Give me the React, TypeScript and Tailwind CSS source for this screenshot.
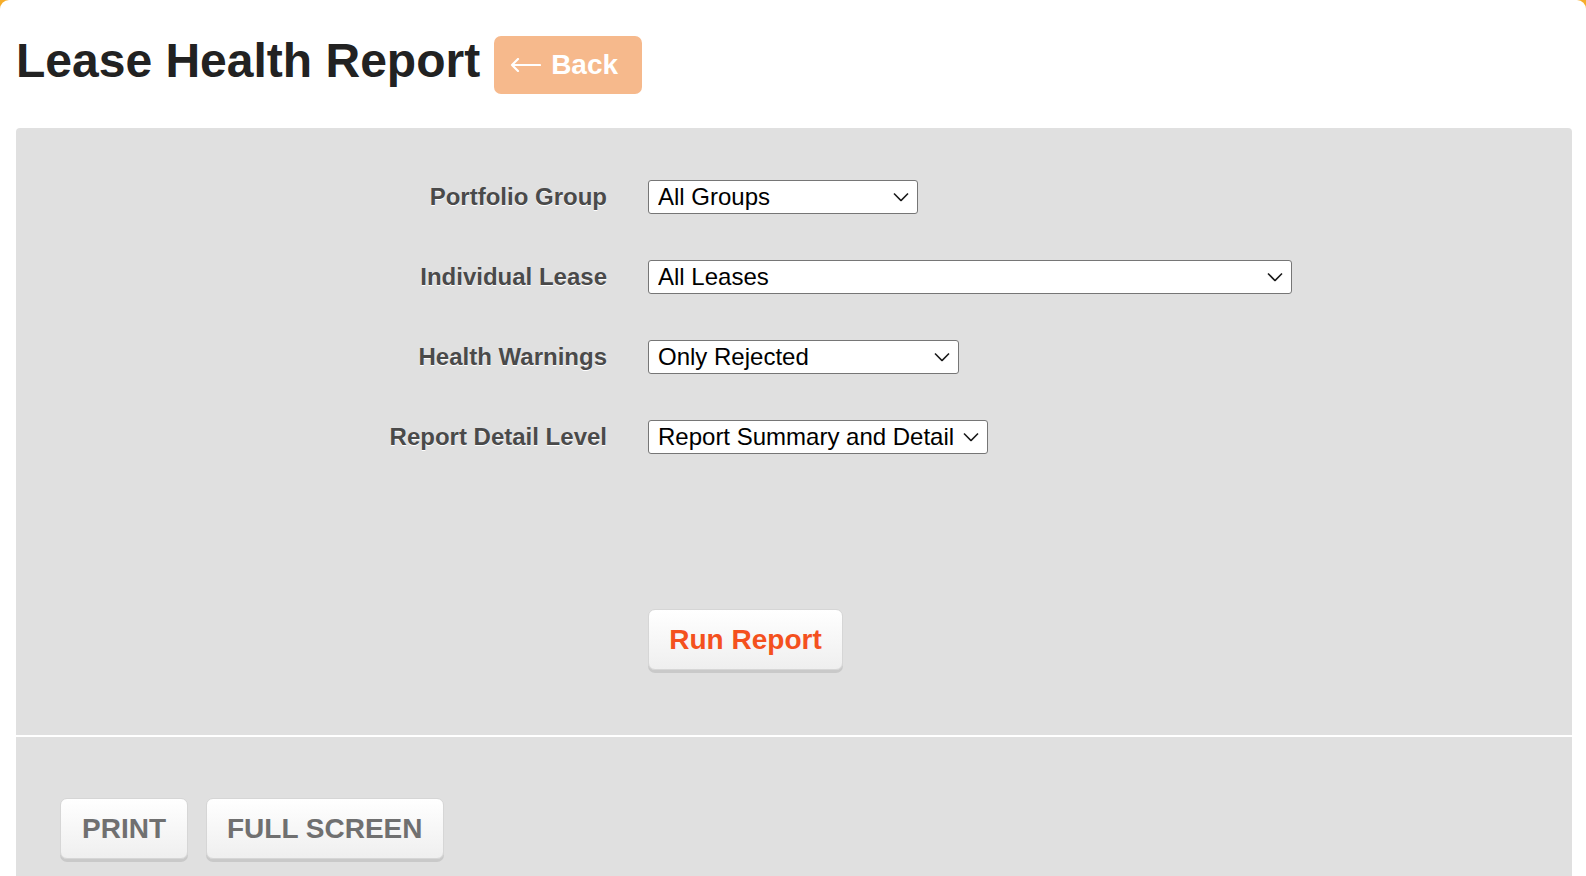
import React, { useState } from 'react';

const font = { fontFamily: '"Liberation Sans", Arial, sans-serif' };

function Chevron() {
  return (
    <svg
      className="pointer-events-none absolute right-[9px] top-1/2 -translate-y-1/2"
      width="16"
      height="9"
      viewBox="0 0 16 9"
      fill="none"
    >
      <path d="M1 1l7 7 7-7" stroke="#1a1a1a" strokeWidth="1.6" />
    </svg>
  );
}

function BackArrow() {
  return (
    <svg width="31" height="14" viewBox="0 0 31 14" fill="none">
      <path d="M30 7H2M8 1L2 7l6 6" stroke="#fff" strokeWidth="2.2" strokeLinecap="round" strokeLinejoin="round" />
    </svg>
  );
}

function SelectField({
  value,
  options,
  width,
  onChange,
}: {
  value: string;
  options: string[];
  width: string;
  onChange: (v: string) => void;
}) {
  return (
    <div className={`relative ${width}`}>
      <select
        value={value}
        onChange={(e) => onChange(e.target.value)}
        className="block h-[34px] w-full appearance-none rounded-[3px] border border-[#767676] bg-white pl-[9px] pr-8 text-[24px] leading-[30px] text-black outline-none"
        style={font}
      >
        {options.map((o) => (
          <option key={o}>{o}</option>
        ))}
      </select>
      <Chevron />
    </div>
  );
}

export default function App() {
  const [group, setGroup] = useState('All Groups');
  const [lease, setLease] = useState('All Leases');
  const [warnings, setWarnings] = useState('Only Rejected');
  const [detail, setDetail] = useState('Report Summary and Detail');

  const rows = [
    { label: 'Portfolio Group', value: group, set: setGroup, options: ['All Groups'], width: 'w-[270px]' },
    { label: 'Individual Lease', value: lease, set: setLease, options: ['All Leases'], width: 'w-[644px]' },
    { label: 'Health Warnings', value: warnings, set: setWarnings, options: ['Only Rejected', 'All Warnings'], width: 'w-[311px]' },
    { label: 'Report Detail Level', value: detail, set: setDetail, options: ['Report Summary and Detail', 'Summary Only'], width: 'w-[340px]' },
  ];

  const greyButton =
    'whitespace-nowrap rounded-[7px] border border-[#d6d6d6] bg-gradient-to-b from-white to-[#efefef] h-[61px] text-[28px] font-bold shadow-[0_3px_0_#c9c9c9]';

  return (
    <div className="min-h-screen bg-[#f6ad2a]" style={font}>
      <div className="min-h-screen rounded-t-[9px] bg-white pl-[16px] pr-[14px]">
        <div className="flex items-start pt-[36px]">
          <h1 className="mt-[1px] text-[48px] font-bold leading-[48px] text-[#222]">Lease Health Report</h1>
          <button className="ml-[14px] flex h-[58px] items-center gap-[10px] rounded-[7px] bg-[#f6b98c] pl-[16px] pr-[24px] text-[28px] font-bold text-white">
            <BackArrow />
            <span>Back</span>
          </button>
        </div>

        <div className="mt-[34px] rounded-t-[4px] bg-[#e0e0e0]">
          <div className="grid grid-cols-[591px_1fr] items-center gap-x-[41px] gap-y-[46px] pt-[52px]">
            {rows.map((r) => (
              <React.Fragment key={r.label}>
                <label className="text-right text-[24px] font-bold leading-[34px] text-[#4a4a4a] [text-shadow:0_1px_0_#fff]">
                  {r.label}
                </label>
                <SelectField value={r.value} options={r.options} width={r.width} onChange={r.set} />
              </React.Fragment>
            ))}
          </div>
          <div className="pb-[65px] pl-[632px] pt-[155px]">
            <button className={`${greyButton} w-[195px] text-[#f4511e]`}>Run Report</button>
          </div>
        </div>

        <div className="mt-[2px] flex h-[139px] items-start gap-[18px] bg-[#e0e0e0] pl-[44px] pt-[61px]">
          <button className={`${greyButton} px-[21px] text-[#707070]`}>PRINT</button>
          <button className={`${greyButton} px-[20px] text-[#707070]`}>FULL SCREEN</button>
        </div>
      </div>
    </div>
  );
}
